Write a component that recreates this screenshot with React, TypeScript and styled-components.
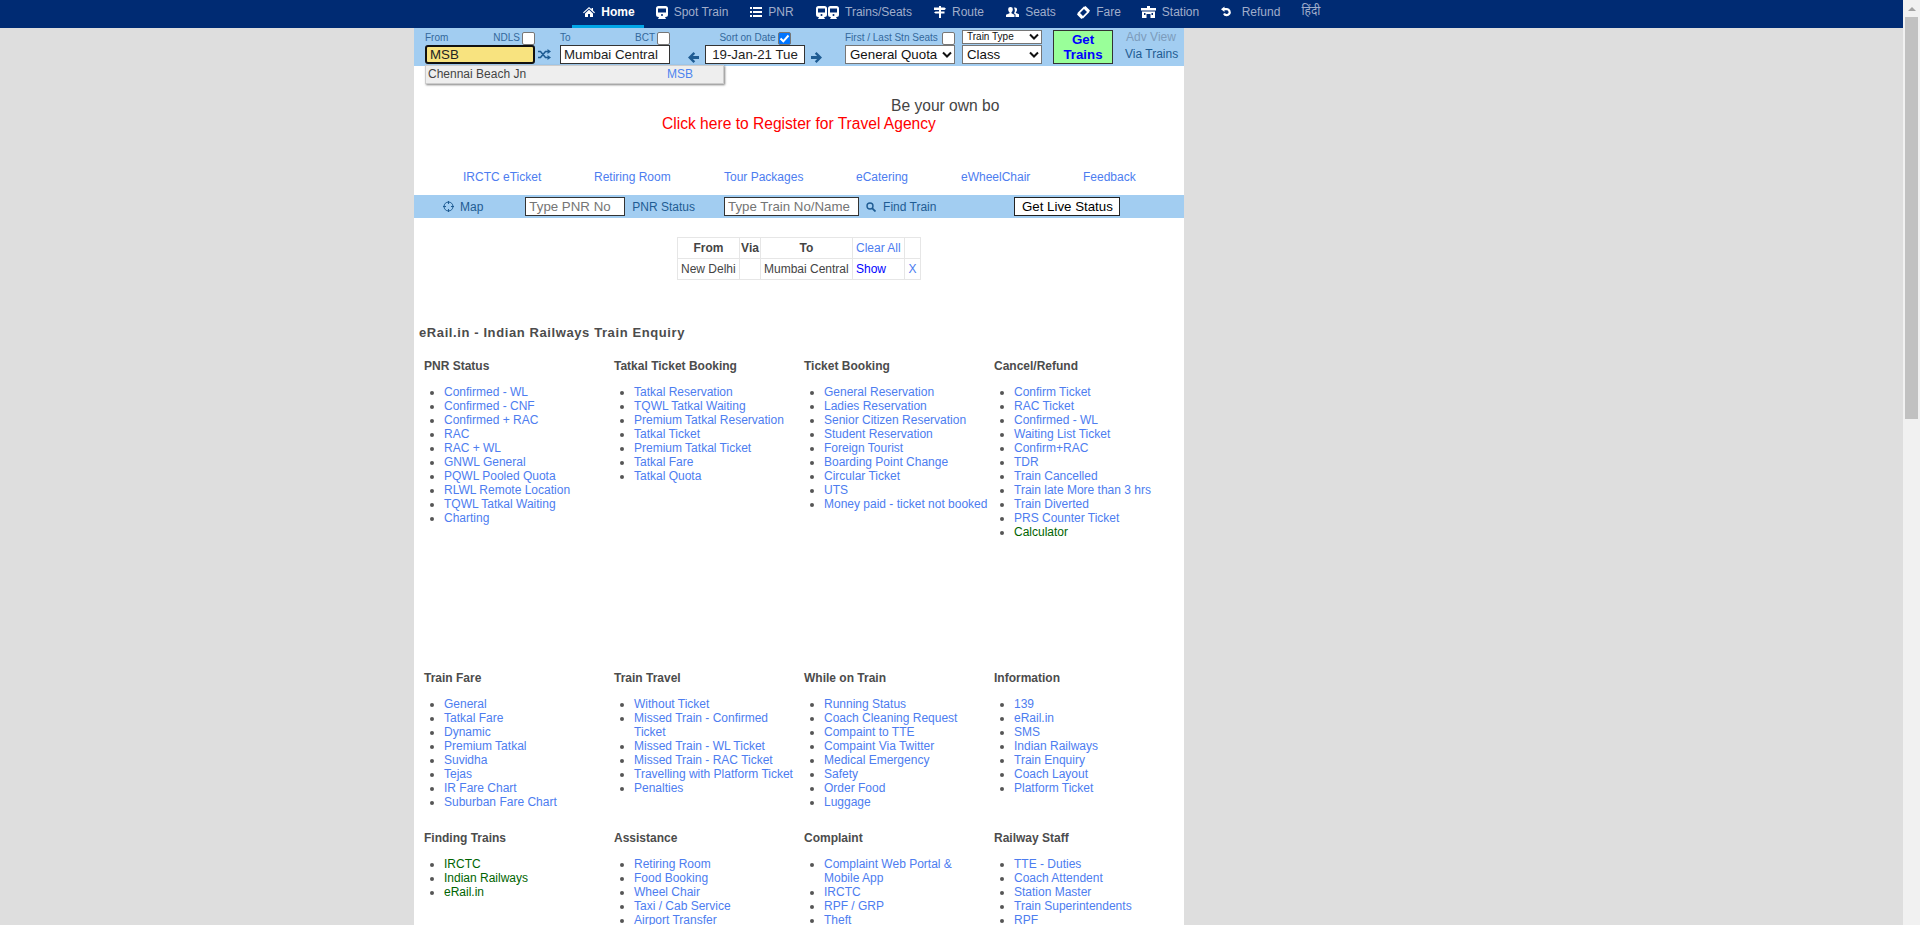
import React from "react";
import styled, { createGlobalStyle } from "styled-components";

const GlobalStyle = createGlobalStyle`
  html, body { margin: 0; padding: 0; height: 100%; overflow: hidden; }
  body { background: #dedede; font-family: "Liberation Sans", Arial, sans-serif; font-size: 12px; color: #444; }
`;

const Shell = styled.div`
  display: flex;
  height: 925px;
  overflow: hidden;
`;
const Page = styled.div`
  flex: 1;
  min-width: 0;
`;
const ScrollTrack = styled.div`
  width: 17px;
  background: #f1f1f1;
  display: flex;
  flex-direction: column;
  align-items: center;
`;
const ScrollArrow = styled.div`
  height: 17px;
  width: 100%;
  display: flex;
  align-items: center;
  justify-content: center;
  &::before {
    content: "";
    border-left: 4px solid transparent;
    border-right: 4px solid transparent;
    border-bottom: 4px solid #a3a3a3;
  }
`;
const ScrollThumb = styled.div`
  width: 13px;
  height: 402px;
  background: #c1c1c1;
`;

const TopNav = styled.nav`
  height: 28px;
  background: #002b73;
  display: flex;
  padding-left: 572px;
`;
const NavItem = styled.a<{ $active?: boolean; $w: number; $gap?: number }>`
  box-sizing: border-box;
  width: ${(p) => p.$w}px;
  height: 28px;
  padding: 5px 0 0 2px;
  display: flex;
  justify-content: center;
  align-items: flex-start;
  gap: ${(p) => p.$gap ?? 6}px;
  line-height: 14px;
  font-size: 12px;
  color: ${(p) => (p.$active ? "#fff" : "#a0aecb")};
  font-weight: ${(p) => (p.$active ? 700 : 400)};
  border-bottom: 3px solid ${(p) => (p.$active ? "#00a5e6" : "transparent")};
  svg { flex: none; margin-top: 1px; }
`;
const NavIcon = styled.span`
  color: #fff;
  display: inline-flex;
`;
const HindiItem = styled(NavItem)`
  font-family: "Noto Sans CJK SC", "Noto Sans", sans-serif;
  padding-top: 3px;
`;

const Content = styled.main`
  width: 770px;
  margin-left: 414px;
  background: #fff;
  height: 897px;
  position: relative;
`;
const SearchBar = styled.form`
  height: 38px;
  background: #a2cdf1;
  display: flex;
  padding-left: 11px;
  box-sizing: border-box;
`;
const Field = styled.div<{ $w: number; $ml?: number }>`
  width: ${(p) => p.$w}px;
  margin-left: ${(p) => p.$ml ?? 0}px;
  flex: none;
`;
const LabelRow = styled.div<{ $center?: boolean }>`
  height: 17px;
  display: flex;
  align-items: flex-end;
  justify-content: ${(p) => (p.$center ? "center" : "space-between")};
  gap: 2px;
  font-size: 10px;
  line-height: 14px;
  color: #33689c;
`;
const PushRight = styled.span`
  margin-left: auto;
`;
const Check = styled.span<{ $on?: boolean }>`
  box-sizing: border-box;
  width: 13px;
  height: 13px;
  border-radius: 2px;
  border: 1px solid #767676;
  background: ${(p) => (p.$on ? "#0075ff" : "#fff")};
  display: inline-flex;
  align-items: center;
  justify-content: center;
  flex: none;
`;
const TextBox = styled.div<{ $focus?: boolean; $center?: boolean }>`
  box-sizing: border-box;
  height: 19px;
  font-size: 13.3px;
  padding: 0 3px;
  background: ${(p) => (p.$focus ? "#f8e37f" : "#fff")};
  color: #222;
  border: ${(p) => (p.$focus ? "2px solid #111" : "1px solid #333")};
  border-radius: ${(p) => (p.$focus ? "3px" : "0")};
  line-height: ${(p) => (p.$focus ? "15px" : "17px")};
  text-align: ${(p) => (p.$center ? "center" : "left")};
  white-space: nowrap;
  overflow: hidden;
`;
const IconSlot = styled.div<{ $w: number; $top: number; $justify: string; $px?: number }>`
  box-sizing: border-box;
  width: ${(p) => p.$w}px;
  flex: none;
  padding: ${(p) => p.$top}px ${(p) => p.$px ?? 0}px 0;
  color: #1f5c93;
  display: flex;
  justify-content: ${(p) => p.$justify};
`;
const SelectBox = styled.div<{ $small?: boolean }>`
  box-sizing: border-box;
  height: ${(p) => (p.$small ? 14 : 19)}px;
  border: 1px solid #767676;
  background: #fff;
  font-size: ${(p) => (p.$small ? 10 : 13.3)}px;
  line-height: ${(p) => (p.$small ? 12 : 17)}px;
  padding: 0 1px 0 4px;
  display: flex;
  justify-content: space-between;
  align-items: center;
  color: #111;
  white-space: nowrap;
  svg { flex: none; }
`;
const TypeStack = styled.div`
  display: flex;
  flex-direction: column;
  gap: 1px;
  padding-top: 2px;
`;
const GetButton = styled.button`
  box-sizing: border-box;
  width: 60px;
  height: 34px;
  margin: 2px 0 0 11px;
  padding: 0;
  background: #9f9;
  border: 1px solid #333;
  color: #00f;
  font: 700 13.3px/15px "Liberation Sans", Arial, sans-serif;
  flex: none;
`;
const AdvColumn = styled.div`
  margin-left: 12px;
  width: 52px;
  text-align: center;
  padding-top: 1px;
  font-size: 12px;
  line-height: 17px;
  color: #1f5c93;
  white-space: nowrap;
`;
const AdvDim = styled.div`
  color: #7c9cbc;
`;
const Suggest = styled.div`
  position: absolute;
  left: 11px;
  top: 37px;
  width: 299px;
  height: 19px;
  box-sizing: border-box;
  background: #eee;
  border: 1px solid #ccc;
  box-shadow: 1px 1px 2px rgba(0, 0, 0, 0.5);
  display: flex;
  padding-left: 2px;
  line-height: 17px;
  font-size: 12px;
  color: #444;
  z-index: 2;
`;
const SuggestCode = styled.span`
  position: absolute;
  left: 241px;
  color: #4d85ee;
`;
const Promo = styled.div`
  height: 101px;
  font-size: 15.6px;
  line-height: 18px;
`;
const PromoLine = styled.div`
  padding: 31px 0 0 477px;
  color: #444;
`;
const PromoLink = styled.div`
  padding: 0 0 0 248px;
  color: #f00;
`;
const LinkRow = styled.div`
  height: 28px;
  box-sizing: border-box;
  display: flex;
  align-items: flex-start;
  padding: 3px 0 0 49px;
`;
const TopLink = styled.a<{ $w: number }>`
  width: ${(p) => p.$w}px;
  flex: none;
  color: #4d7df0;
  font-size: 12px;
  line-height: 14px;
`;
const ToolBar = styled.div`
  height: 23px;
  background: #a2cdf1;
  display: flex;
  align-items: center;
  color: #1f5c93;
  font-size: 12px;
`;
const ToolText = styled.span<{ $ml: number }>`
  margin-left: ${(p) => p.$ml}px;
  padding-top: 1px;
  white-space: nowrap;
`;
const ToolIcon = styled.span<{ $ml: number }>`
  margin-left: ${(p) => p.$ml}px;
  display: inline-flex;
`;
const PlainInput = styled.div<{ $w: number; $ml: number }>`
  box-sizing: border-box;
  width: ${(p) => p.$w}px;
  margin-left: ${(p) => p.$ml}px;
  height: 19px;
  border: 1px solid #333;
  background: #fff;
  color: #757575;
  font-size: 13.3px;
  line-height: 17px;
  padding: 0 3px;
  white-space: nowrap;
  overflow: hidden;
`;
const LiveButton = styled.div`
  box-sizing: border-box;
  width: 106px;
  height: 19px;
  margin-left: 78px;
  border: 1px solid #222;
  background: #fff;
  color: #000;
  font-size: 13.3px;
  line-height: 17px;
  text-align: center;
`;
const HistoryWrap = styled.div`
  padding: 19px 0 0 263px;
`;
const History = styled.table`
  border-collapse: collapse;
  table-layout: fixed;
  width: 243px;
  font-size: 12px;
  color: #444;
  th, td {
    border: 1px solid #e6e6e6;
    height: 21px;
    white-space: nowrap;
    box-sizing: border-box;
    padding: 0;
  }
  th { font-weight: 700; text-align: center; }
  td { padding: 0 0 0 3px; }
`;
const HistoryHead = styled.th<{ $w: number }>`
  width: ${(p) => p.$w}px;
`;
const CloseCell = styled.td`
  width: 16px;
  && { padding: 0; text-align: center; }
`;
const ClearCell = styled.td`
  width: 52px;
`;
const Blue = styled.a`
  color: #4d7df0;
`;
const DeepBlue = styled.a`
  color: #00f;
`;
const Heading = styled.h1`
  margin: 45px 0 0 5px;
  font-size: 13px;
  line-height: 16px;
  letter-spacing: 0.6px;
  font-weight: 700;
  color: #4c4c4c;
`;
const Grid = styled.div<{ $h: number; $pt: number }>`
  display: grid;
  grid-template-columns: repeat(4, 190px);
  padding: ${(p) => p.$pt}px 0 0 10px;
  height: ${(p) => p.$h}px;
  box-sizing: border-box;
`;
const SectionTitle = styled.h2`
  margin: 0;
  font-size: 12px;
  line-height: 14px;
  font-weight: 700;
  color: #4c4c4c;
`;
const List = styled.ul`
  margin: 12px 0 0;
  padding: 0 0 0 20px;
  font-size: 12px;
  line-height: 14px;
  color: #555;
`;
const Item = styled.li`
  width: 165px;
`;
const ItemLink = styled.a<{ $green?: boolean }>`
  color: ${(p) => (p.$green ? "#006400" : "#4d7df0")};
`;

type Section = { title: string; items: string[]; green?: string[] };

const row1: Section[] = [
  { title: "PNR Status", items: ["Confirmed - WL", "Confirmed - CNF", "Confirmed + RAC", "RAC", "RAC + WL", "GNWL General", "PQWL Pooled Quota", "RLWL Remote Location", "TQWL Tatkal Waiting", "Charting"] },
  { title: "Tatkal Ticket Booking", items: ["Tatkal Reservation", "TQWL Tatkal Waiting", "Premium Tatkal Reservation", "Tatkal Ticket", "Premium Tatkal Ticket", "Tatkal Fare", "Tatkal Quota"] },
  { title: "Ticket Booking", items: ["General Reservation", "Ladies Reservation", "Senior Citizen Reservation", "Student Reservation", "Foreign Tourist", "Boarding Point Change", "Circular Ticket", "UTS", "Money paid - ticket not booked"] },
  { title: "Cancel/Refund", items: ["Confirm Ticket", "RAC Ticket", "Confirmed - WL", "Waiting List Ticket", "Confirm+RAC", "TDR", "Train Cancelled", "Train late More than 3 hrs", "Train Diverted", "PRS Counter Ticket", "Calculator"], green: ["Calculator"] },
];
const row2: Section[] = [
  { title: "Train Fare", items: ["General", "Tatkal Fare", "Dynamic", "Premium Tatkal", "Suvidha", "Tejas", "IR Fare Chart", "Suburban Fare Chart"] },
  { title: "Train Travel", items: ["Without Ticket", "Missed Train - Confirmed Ticket", "Missed Train - WL Ticket", "Missed Train - RAC Ticket", "Travelling with Platform Ticket", "Penalties"] },
  { title: "While on Train", items: ["Running Status", "Coach Cleaning Request", "Compaint to TTE", "Compaint Via Twitter", "Medical Emergency", "Safety", "Order Food", "Luggage"] },
  { title: "Information", items: ["139", "eRail.in", "SMS", "Indian Railways", "Train Enquiry", "Coach Layout", "Platform Ticket"] },
];
const row3: Section[] = [
  { title: "Finding Trains", items: ["IRCTC", "Indian Railways", "eRail.in"], green: ["IRCTC", "Indian Railways", "eRail.in"] },
  { title: "Assistance", items: ["Retiring Room", "Food Booking", "Wheel Chair", "Taxi / Cab Service", "Airport Transfer"] },
  { title: "Complaint", items: ["Complaint Web Portal & Mobile App", "IRCTC", "RPF / GRP", "Theft"] },
  { title: "Railway Staff", items: ["TTE - Duties", "Coach Attendent", "Station Master", "Train Superintendents", "RPF"] },
];

const icons: Record<string, React.ReactNode> = {
  home: (
    <svg width="12" height="12" viewBox="0 0 12 12" fill="currentColor">
      <path d="M6 1 0 6.400l.8.800L6 2.600l5.200 4.600.8-.8-2-1.800V2H8.600v1.200zM2 7.400V11h3V8h2v3h3V7.400L6 3.800z" />
    </svg>
  ),
  train: (
    <svg width="12" height="13" viewBox="0 0 12 13" fill="currentColor">
      <path fillRule="evenodd" d="M2.500 0h7A2.500 2.500 0 0 1 12 2.500v6A2.500 2.500 0 0 1 9.500 11H9l1 2H2l1-2h-.5A2.500 2.500 0 0 1 0 8.500v-6A2.500 2.500 0 0 1 2.500 0zM2 2.500V6.500h8V2.500zM6 8a1 1 0 1 0 0 2 1 1 0 0 0 0-2z" />
    </svg>
  ),
  list: (
    <svg width="12" height="12" viewBox="0 0 12 12" fill="currentColor">
      <path d="M0 1h2v2H0zM3 1h9v2H3zM0 5h2v2H0zM3 5h9v2H3zM0 9h2v2H0zM3 9h9v2H3z" />
    </svg>
  ),
  trains: (
    <svg width="23" height="13" viewBox="0 0 23 13" fill="currentColor">
      <path fillRule="evenodd" d="M2.500 0h6A2.500 2.500 0 0 1 11 2.500v6A2.500 2.500 0 0 1 8.500 11H8l1 2H2l1-2h-.5A2.500 2.500 0 0 1 0 8.500v-6A2.500 2.500 0 0 1 2.500 0zM2 2.500v4h7v-4zm3.500 5.500a1 1 0 1 0 0 2 1 1 0 0 0 0-2z" />
      <path fillRule="evenodd" d="M14.500 0h6A2.500 2.500 0 0 1 23 2.500v6a2.500 2.500 0 0 1-2.500 2.500H20l1 2h-7l1-2h-.5A2.500 2.500 0 0 1 12 8.500v-6A2.500 2.500 0 0 1 14.500 0zM14 2.500v4h7v-4zm3.500 5.500a1 1 0 1 0 0 2 1 1 0 0 0 0-2z" />
    </svg>
  ),
  route: (
    <svg width="12" height="12" viewBox="0 0 12 12" fill="currentColor">
      <path d="M5 0h2v1.500h3.500L12 2.700 10.500 4H7v1.500h3.500V7.500H7V12H5V7.500H1.500L0 6.500l1.500-1H5V4H0V1.500h5z" />
    </svg>
  ),
  seats: (
    <svg width="13" height="12" viewBox="0 0 13 12" fill="currentColor">
      <path d="M4.500 1a2.300 2.300 0 0 1 2.300 2.500c0 1.200-.6 2.300-1.300 2.800v1l3 1.500V11H0V8.800l3.500-1.500v-1C2.800 5.800 2.200 4.700 2.200 3.500A2.300 2.300 0 0 1 4.500 1zM9 1.500a2 2 0 0 1 2 2.200c0 1-.5 2-1.100 2.400v.8L13 8.300V11H9.500V8.500L7.800 7.300c.4-.5.8-1.300 1-2.100.1-1.300-.1-2.500-.8-3.400.3-.2.600-.3 1-.3z" />
    </svg>
  ),
  ticket: (
    <svg width="13" height="13" viewBox="0 0 13 13" fill="currentColor">
      <path fillRule="evenodd" d="M8.500 0 13 4.500c-.6.600-.8 1-.6 1.600L6 12.500c-.6-.3-1.100-.1-1.600.5L0 8.500c.6-.5.800-1 .5-1.600L6.900.6c.6.300 1 .1 1.600-.6zM7 3 3 7l3 3 4-4z" />
    </svg>
  ),
  station: (
    <svg width="15" height="12" viewBox="0 0 15 12" fill="currentColor">
      <path fillRule="evenodd" d="M6 0h3v2h6v2.500H0V2h6zM1 5.500h13V12H9.500V8h-4v4H1zM3 7v2h1.500V7zm7.500 0v2H12V7z" />
    </svg>
  ),
  refund: (
    <svg width="12" height="12" viewBox="0 0 12 12" fill="none" stroke="currentColor" strokeWidth="2.200">
      <path d="M4 3.200h3a3 3 0 1 1-3 4.300" />
      <path d="M1 3.200 4.500 0.500v5.400z" fill="currentColor" stroke="none" />
    </svg>
  ),
};

const navItems: { label: string; icon: string; w: number; active?: boolean; gap?: number }[] = [
  { label: "Home", icon: "home", w: 72, active: true },
  { label: "Spot Train", icon: "train", w: 94 },
  { label: "PNR", icon: "list", w: 66 },
  { label: "Trains/Seats", icon: "trains", w: 118 },
  { label: "Route", icon: "route", w: 72 },
  { label: "Seats", icon: "seats", w: 72 },
  { label: "Fare", icon: "ticket", w: 64 },
  { label: "Station", icon: "station", w: 78 },
  { label: "Refund", icon: "refund", w: 82, gap: 10 },
];

const Chevron = () => (
  <svg width="12" height="8" viewBox="0 0 12 8" fill="none" stroke="#111" strokeWidth="2">
    <path d="M2 1.500 6 5.500 10 1.500" />
  </svg>
);
const ArrowRight = () => (
  <svg width="11" height="11" viewBox="0 0 11 11" fill="currentColor">
    <path d="M5.500 0 11 5.500 5.500 11 3.800 9.300l2.300-2.300H0V4h6.100L3.800 1.700z" />
  </svg>
);
const ArrowLeft = () => (
  <svg width="11" height="11" viewBox="0 0 11 11" fill="currentColor">
    <path d="M5.500 0 0 5.500 5.500 11l1.700-1.700L4.900 7H11V4H4.900l2.300-2.300z" />
  </svg>
);
const ShuffleIcon = () => (
  <svg width="13" height="11" viewBox="0 0 13 11" fill="none" stroke="currentColor" strokeWidth="1.600">
    <path d="M0 2.500h2.500l5 6H10M0 8.500h2.500l5-6H10" />
    <path d="M9.500 0 13 2.500 9.500 5zM9.500 6 13 8.500 9.500 11z" fill="currentColor" stroke="none" />
  </svg>
);
const TickIcon = () => (
  <svg width="11" height="11" viewBox="0 0 11 11" fill="none" stroke="#fff" strokeWidth="2">
    <path d="M1.500 5.500 4.300 8.300 9.500 2.500" />
  </svg>
);
const CompassIcon = () => (
  <svg width="11" height="11" viewBox="0 0 11 11" fill="none" stroke="#1f5c93" strokeWidth="1">
    <circle cx="5.500" cy="5.500" r="4.500" />
    <path d="M5.500 0v3M5.500 8v3M0 5.500h3M8 5.500h3" />
  </svg>
);
const SearchIcon = () => (
  <svg width="10" height="10" viewBox="0 0 10 10" fill="none" stroke="#1f5c93" strokeWidth="1.400">
    <circle cx="4" cy="4" r="3" />
    <path d="M6.300 6.300 9.500 9.500" strokeWidth="1.800" />
  </svg>
);

const LinkGrid: React.FC<{ sections: Section[]; h: number; pt: number }> = ({ sections, h, pt }) => (
  <Grid $h={h} $pt={pt}>
    {sections.map((s) => (
      <div key={s.title}>
        <SectionTitle>{s.title}</SectionTitle>
        <List>
          {s.items.map((it) => (
            <Item key={it}>
              <ItemLink $green={s.green?.includes(it)}>{it}</ItemLink>
            </Item>
          ))}
        </List>
      </div>
    ))}
  </Grid>
);

export default function App() {
  return (
    <>
      <GlobalStyle />
      <Shell>
        <Page>
          <TopNav>
            {navItems.map((n) => (
              <NavItem key={n.label} $active={n.active} $w={n.w} $gap={n.gap}>
                <NavIcon>{icons[n.icon]}</NavIcon>
                {n.label}
              </NavItem>
            ))}
            <HindiItem $w={40}>हिंदी</HindiItem>
          </TopNav>
          <Content>
            <SearchBar>
              <Field $w={110}>
                <LabelRow>
                  <span>From</span>
                  <PushRight>NDLS</PushRight>
                  <Check />
                </LabelRow>
                <TextBox $focus>MSB</TextBox>
              </Field>
              <IconSlot $w={25} $top={21} $justify="flex-start" $px={3}>
                <ShuffleIcon />
              </IconSlot>
              <Field $w={110}>
                <LabelRow>
                  <span>To</span>
                  <PushRight>BCT</PushRight>
                  <Check />
                </LabelRow>
                <TextBox>Mumbai Central</TextBox>
              </Field>
              <IconSlot $w={35} $top={24} $justify="flex-end" $px={6}>
                <ArrowLeft />
              </IconSlot>
              <Field $w={100}>
                <LabelRow $center>
                  <span>Sort on Date</span>
                  <Check $on>
                    <TickIcon />
                  </Check>
                </LabelRow>
                <TextBox $center>19-Jan-21 Tue</TextBox>
              </Field>
              <IconSlot $w={23} $top={24} $justify="flex-start" $px={6}>
                <ArrowRight />
              </IconSlot>
              <Field $w={110} $ml={17}>
                <LabelRow>
                  <span>First / Last Stn Seats</span>
                  <Check />
                </LabelRow>
                <SelectBox>
                  General Quota
                  <Chevron />
                </SelectBox>
              </Field>
              <Field $w={80} $ml={7}>
                <TypeStack>
                  <SelectBox $small>
                    Train Type
                    <Chevron />
                  </SelectBox>
                  <SelectBox>
                    Class
                    <Chevron />
                  </SelectBox>
                </TypeStack>
              </Field>
              <GetButton type="button">Get Trains</GetButton>
              <AdvColumn>
                <AdvDim>Adv View</AdvDim>
                Via Trains
              </AdvColumn>
            </SearchBar>
            <Suggest>
              Chennai Beach Jn
              <SuggestCode>MSB</SuggestCode>
            </Suggest>
            <Promo>
              <PromoLine>Be your own bo</PromoLine>
              <PromoLink>Click here to Register for Travel Agency</PromoLink>
            </Promo>
            <LinkRow>
              <TopLink $w={131}>IRCTC eTicket</TopLink>
              <TopLink $w={130}>Retiring Room</TopLink>
              <TopLink $w={132}>Tour Packages</TopLink>
              <TopLink $w={105}>eCatering</TopLink>
              <TopLink $w={122}>eWheelChair</TopLink>
              <TopLink $w={60}>Feedback</TopLink>
            </LinkRow>
            <ToolBar>
              <ToolIcon $ml={29}>
                <CompassIcon />
              </ToolIcon>
              <ToolText $ml={6}>Map</ToolText>
              <PlainInput $w={100} $ml={42}>Type PNR No</PlainInput>
              <ToolText $ml={7}>PNR Status</ToolText>
              <PlainInput $w={135} $ml={29}>Type Train No/Name</PlainInput>
              <ToolIcon $ml={7}>
                <SearchIcon />
              </ToolIcon>
              <ToolText $ml={7}>Find Train</ToolText>
              <LiveButton>Get Live Status</LiveButton>
            </ToolBar>
            <HistoryWrap>
              <History>
                <tbody>
                  <tr>
                    <HistoryHead $w={62}>From</HistoryHead>
                    <HistoryHead $w={21}>Via</HistoryHead>
                    <HistoryHead $w={92}>To</HistoryHead>
                    <ClearCell><Blue>Clear All</Blue></ClearCell>
                    <CloseCell />
                  </tr>
                  <tr>
                    <td>New Delhi</td>
                    <td />
                    <td>Mumbai Central</td>
                    <td><DeepBlue>Show</DeepBlue></td>
                    <CloseCell><Blue>X</Blue></CloseCell>
                  </tr>
                </tbody>
              </History>
            </HistoryWrap>
            <Heading>eRail.in - Indian Railways Train Enquiry</Heading>
            <LinkGrid sections={row1} h={330} pt={18} />
            <LinkGrid sections={row2} h={160} pt={0} />
            <LinkGrid sections={row3} h={100} pt={0} />
          </Content>
        </Page>
        <ScrollTrack>
          <ScrollArrow />
          <ScrollThumb />
        </ScrollTrack>
      </Shell>
    </>
  );
}
